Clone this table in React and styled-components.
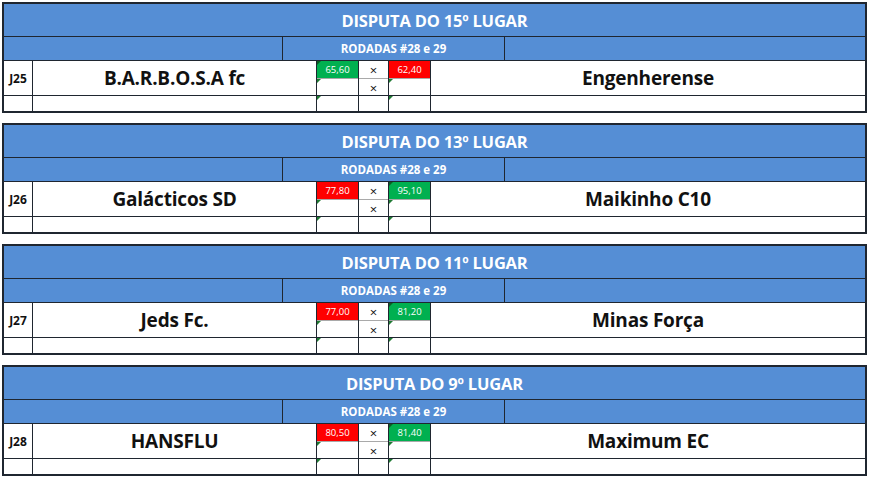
import React from "react";
import styled, { createGlobalStyle } from "styled-components";

const GlobalStyle = createGlobalStyle`
  html, body {
    margin: 0;
    padding: 0;
    background: #ffffff;
  }
  body {
    font-family: "Open Sans", "Lato", "Liberation Sans", sans-serif;
  }
`;

const LINE = "#1f2630";
const BLUE = "#558ed5";
const GREEN = "#00b050";
const RED = "#ff0000";

const matches = [
  { title: "DISPUTA DO 15º LUGAR", game: "J25", home: "B.A.R.B.O.S.A fc", away: "Engenherense", homeScore: "65,60", awayScore: "62,40" },
  { title: "DISPUTA DO 13º LUGAR", game: "J26", home: "Galácticos SD", away: "Maikinho C10", homeScore: "77,80", awayScore: "95,10" },
  { title: "DISPUTA DO 11º LUGAR", game: "J27", home: "Jeds Fc.", away: "Minas Força", homeScore: "77,00", awayScore: "81,20" },
  { title: "DISPUTA DO 9º LUGAR", game: "J28", home: "HANSFLU", away: "Maximum EC", homeScore: "80,50", awayScore: "81,40" },
];

const toNumber = (s) => parseFloat(s.replace(",", "."));

const Match = ({ item }) => {
  const home = toNumber(item.homeScore);
  const away = toNumber(item.awayScore);

  return (
    <Block>
      <Title>{item.title}</Title>
      <SubRow>
        <SubCell />
        <SubCell>RODADAS #28 e 29</SubCell>
        <SubCell />
      </SubRow>
      <Body>
        <GameCell>{item.game}</GameCell>
        <TeamCell>{item.home}</TeamCell>
        <ScoreStack>
          <ScoreTop $win={home > away}>{item.homeScore}</ScoreTop>
          <ScoreBottom $mark />
        </ScoreStack>
        <ScoreStack>
          <VersusTop>×</VersusTop>
          <VersusBottom>×</VersusBottom>
        </ScoreStack>
        <ScoreStack>
          <ScoreTop $win={away > home}>{item.awayScore}</ScoreTop>
          <ScoreBottom $mark />
        </ScoreStack>
        <TeamCell>{item.away}</TeamCell>

        <EmptyCell />
        <EmptyCell />
        <EmptyCell $mark />
        <EmptyCell />
        <EmptyCell $mark />
        <EmptyCell />
      </Body>
    </Block>
  );
};

const App = () => {
  return (
    <Page>
      <GlobalStyle />
      {matches.map((m) => (
        <Match key={m.game} item={m} />
      ))}
    </Page>
  );
};

const Page = styled.div`
  display: flex;
  flex-direction: column;
  gap: 10px;
  padding: 2px 0 0 2px;
  width: 865px;
`;

const Block = styled.div`
  border: 2px solid ${LINE};
  background: ${LINE};
  display: flex;
  flex-direction: column;
  gap: 1px;
`;

const Title = styled.div`
  height: 32px;
  background: ${BLUE};
  color: #ffffff;
  font-weight: 700;
  font-size: 16.5px;
  display: flex;
  align-items: center;
  justify-content: center;
  letter-spacing: -0.2px;
`;

const SubRow = styled.div`
  display: grid;
  grid-template-columns: 278px 221px 360px;
  gap: 1px;
  height: 23px;
`;

const SubCell = styled.div`
  background: ${BLUE};
  color: #ffffff;
  font-weight: 700;
  font-size: 11.5px;
  display: flex;
  align-items: center;
  justify-content: center;
`;

const Body = styled.div`
  display: grid;
  grid-template-columns: 28px 283px 41px 29px 41px 434px;
  grid-template-rows: 34px 15px;
  gap: 1px;
`;

const Cell = styled.div`
  background: #ffffff;
  position: relative;
  display: flex;
  align-items: center;
  justify-content: center;
  color: #111111;
`;

const Corner = `
  &::before {
    content: "";
    position: absolute;
    left: 0;
    top: 0;
    width: 0;
    height: 0;
    border-top: 4px solid #1f7a33;
    border-right: 4px solid transparent;
  }
`;

const GameCell = styled(Cell)`
  font-weight: 700;
  font-size: 12px;
`;

const TeamCell = styled(Cell)`
  font-weight: 700;
  font-size: 19px;
  letter-spacing: -0.2px;
`;

const ScoreStack = styled.div`
  display: flex;
  flex-direction: column;
  background: #ffffff;
`;

const ScoreTop = styled.div`
  position: relative;
  height: 17px;
  background: ${(p) => (p.$win ? GREEN : RED)};
  color: #ffffff;
  font-size: 9.5px;
  display: flex;
  align-items: center;
  justify-content: center;
  ${(p) => (p.$win ? Corner.replace("#1f7a33", "#0b5e22") : "")}
`;

const ScoreBottom = styled.div`
  position: relative;
  flex: 1;
  border-top: 1px solid #a9a9a9;
  ${(p) => (p.$mark ? Corner : "")}
`;

const VersusTop = styled.div`
  height: 17px;
  display: flex;
  align-items: center;
  justify-content: center;
  font-size: 13px;
  color: #111111;
`;

const VersusBottom = styled(VersusTop)`
  height: auto;
  flex: 1;
  border-top: 1px solid #a9a9a9;
`;

const EmptyCell = styled(Cell)`
  ${(p) => (p.$mark ? Corner : "")}
`;

export default App;
